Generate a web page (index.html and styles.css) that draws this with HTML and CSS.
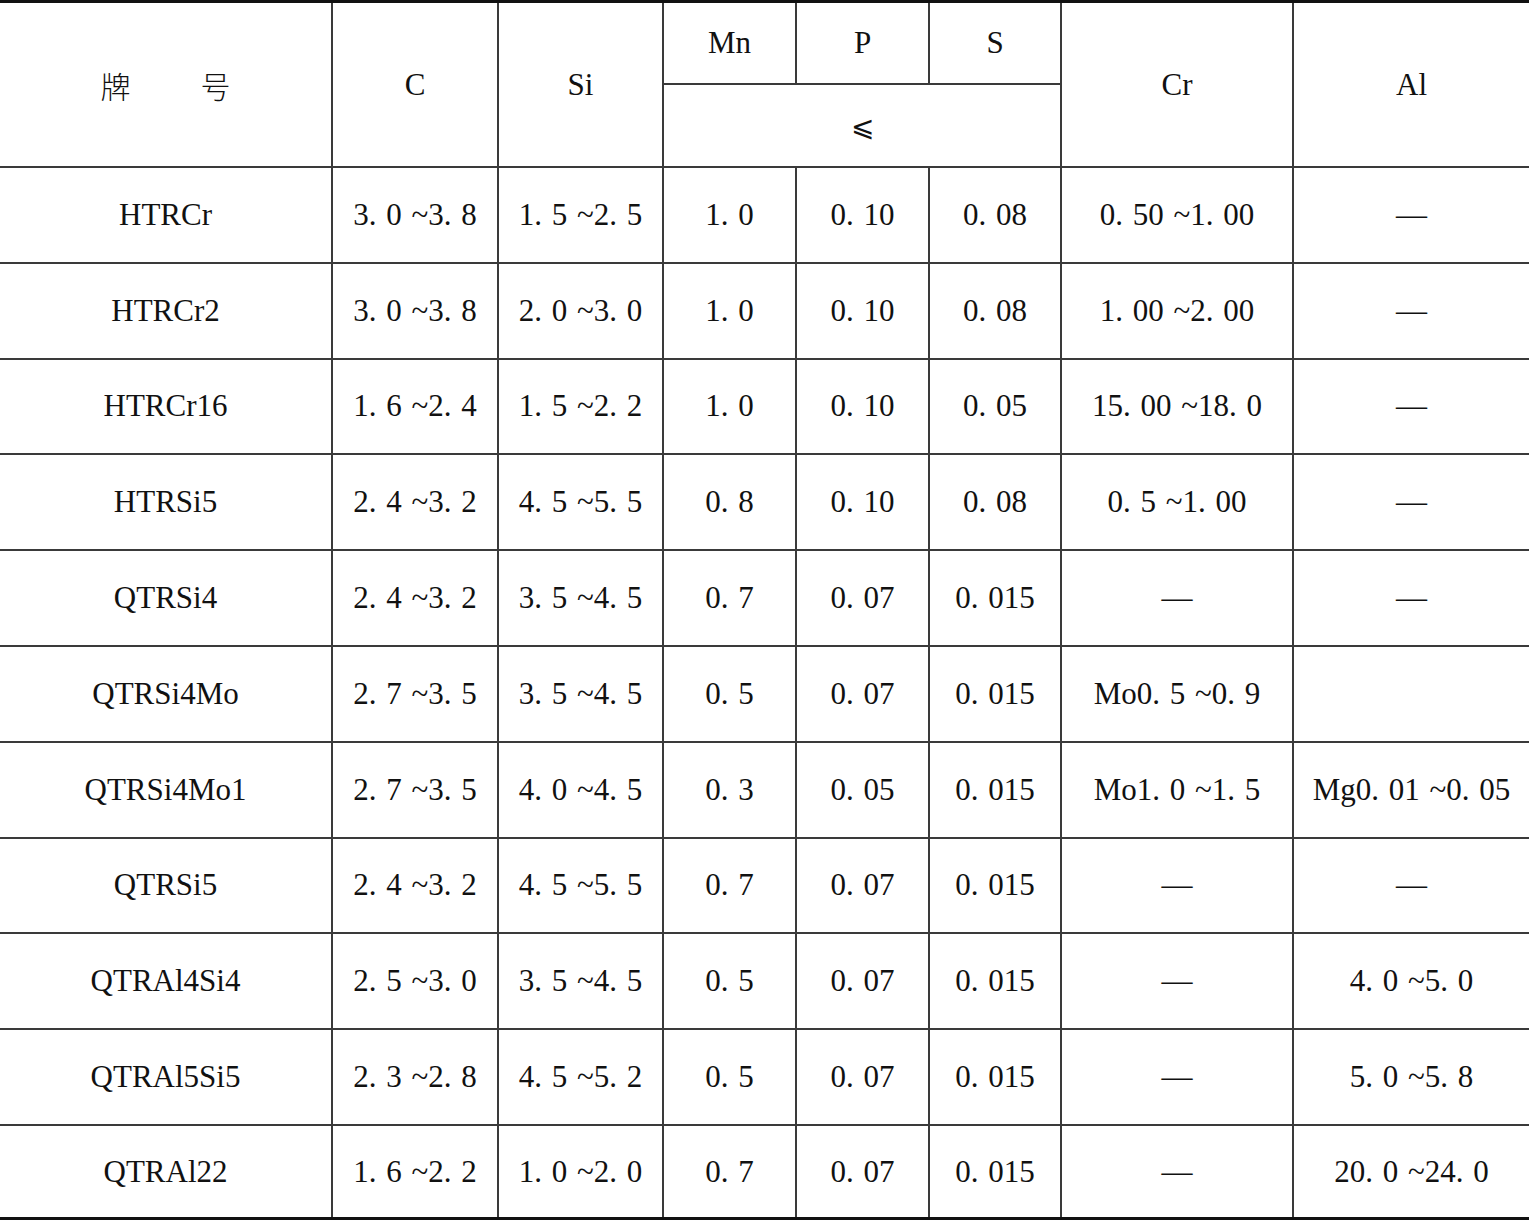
FILE: index.html
```html
<!DOCTYPE html>
<html lang="zh">
<head>
<meta charset="utf-8">
<title>耐热铸铁化学成分</title>
<link rel="stylesheet" href="styles.css">
</head>
<body>
<table class="grid">
  <colgroup>
    <col class="c-name">
    <col class="c-c">
    <col class="c-si">
    <col class="c-mn">
    <col class="c-p">
    <col class="c-s">
    <col class="c-cr">
    <col class="c-al">
  </colgroup>
  <thead>
    <tr class="h1">
      <th rowspan="2"><span class="cjk">牌</span><span class="gap"></span><span class="cjk">号</span></th>
      <th rowspan="2">C</th>
      <th rowspan="2">Si</th>
      <th>Mn</th>
      <th>P</th>
      <th>S</th>
      <th rowspan="2">Cr</th>
      <th rowspan="2">Al</th>
    </tr>
    <tr class="h2">
      <th colspan="3"><span class="le">⩽</span></th>
    </tr>
  </thead>
  <tbody>
    <tr><td>HTRCr</td><td>3. 0 ~3. 8</td><td>1. 5 ~2. 5</td><td>1. 0</td><td>0. 10</td><td>0. 08</td><td>0. 50 ~1. 00</td><td>—</td></tr>
    <tr><td>HTRCr2</td><td>3. 0 ~3. 8</td><td>2. 0 ~3. 0</td><td>1. 0</td><td>0. 10</td><td>0. 08</td><td>1. 00 ~2. 00</td><td>—</td></tr>
    <tr><td>HTRCr16</td><td>1. 6 ~2. 4</td><td>1. 5 ~2. 2</td><td>1. 0</td><td>0. 10</td><td>0. 05</td><td>15. 00 ~18. 0</td><td>—</td></tr>
    <tr><td>HTRSi5</td><td>2. 4 ~3. 2</td><td>4. 5 ~5. 5</td><td>0. 8</td><td>0. 10</td><td>0. 08</td><td>0. 5 ~1. 00</td><td>—</td></tr>
    <tr><td>QTRSi4</td><td>2. 4 ~3. 2</td><td>3. 5 ~4. 5</td><td>0. 7</td><td>0. 07</td><td>0. 015</td><td>—</td><td>—</td></tr>
    <tr><td>QTRSi4Mo</td><td>2. 7 ~3. 5</td><td>3. 5 ~4. 5</td><td>0. 5</td><td>0. 07</td><td>0. 015</td><td>Mo0. 5 ~0. 9</td><td></td></tr>
    <tr><td>QTRSi4Mo1</td><td>2. 7 ~3. 5</td><td>4. 0 ~4. 5</td><td>0. 3</td><td>0. 05</td><td>0. 015</td><td>Mo1. 0 ~1. 5</td><td>Mg0. 01 ~0. 05</td></tr>
    <tr><td>QTRSi5</td><td>2. 4 ~3. 2</td><td>4. 5 ~5. 5</td><td>0. 7</td><td>0. 07</td><td>0. 015</td><td>—</td><td>—</td></tr>
    <tr><td>QTRAl4Si4</td><td>2. 5 ~3. 0</td><td>3. 5 ~4. 5</td><td>0. 5</td><td>0. 07</td><td>0. 015</td><td>—</td><td>4. 0 ~5. 0</td></tr>
    <tr><td>QTRAl5Si5</td><td>2. 3 ~2. 8</td><td>4. 5 ~5. 2</td><td>0. 5</td><td>0. 07</td><td>0. 015</td><td>—</td><td>5. 0 ~5. 8</td></tr>
    <tr class="last"><td>QTRAl22</td><td>1. 6 ~2. 2</td><td>1. 0 ~2. 0</td><td>0. 7</td><td>0. 07</td><td>0. 015</td><td>—</td><td>20. 0 ~24. 0</td></tr>
  </tbody>
</table>
</body>
</html>
```

FILE: styles.css
```css
html, body {
  margin: 0;
  padding: 0;
  background: #ffffff;
}

.grid {
  width: 1529px;
  table-layout: fixed;
  border-collapse: collapse;
  border-top: 3px solid #111;
  border-bottom: 3px solid #111;
  font-family: "Liberation Serif", "Noto Sans CJK SC", serif;
  font-size: 31px;
  color: #111;
}

.c-name { width: 332px; }
.c-c { width: 166px; }
.c-si { width: 165px; }
.c-mn { width: 133px; }
.c-p { width: 133px; }
.c-s { width: 132px; }
.c-cr { width: 232px; }
.c-al { width: 236px; }

.grid th,
.grid td {
  border: 2px solid #3a3a3a;
  padding: 0;
  text-align: center;
  vertical-align: middle;
  font-weight: normal;
  white-space: nowrap;
  word-spacing: 2px;
}

.grid tr > :first-child { border-left: none; }
.grid tr > :last-child { border-right: none; }
.grid thead tr.h2 > :last-child { border-right: 2px solid #3a3a3a; }

.h1 th { height: 80px; }
.h2 th { height: 81px; }
.grid tbody td { height: 93.8px; }
.grid tbody tr.last td { height: 91.5px; }

.cjk {
  font-family: "Noto Sans CJK SC", sans-serif;
  font-weight: 300;
  font-size: 30px;
}

.gap {
  display: inline-block;
  width: 70px;
}

.le {
  font-family: "DejaVu Serif", serif;
  font-size: 28px;
}
```
